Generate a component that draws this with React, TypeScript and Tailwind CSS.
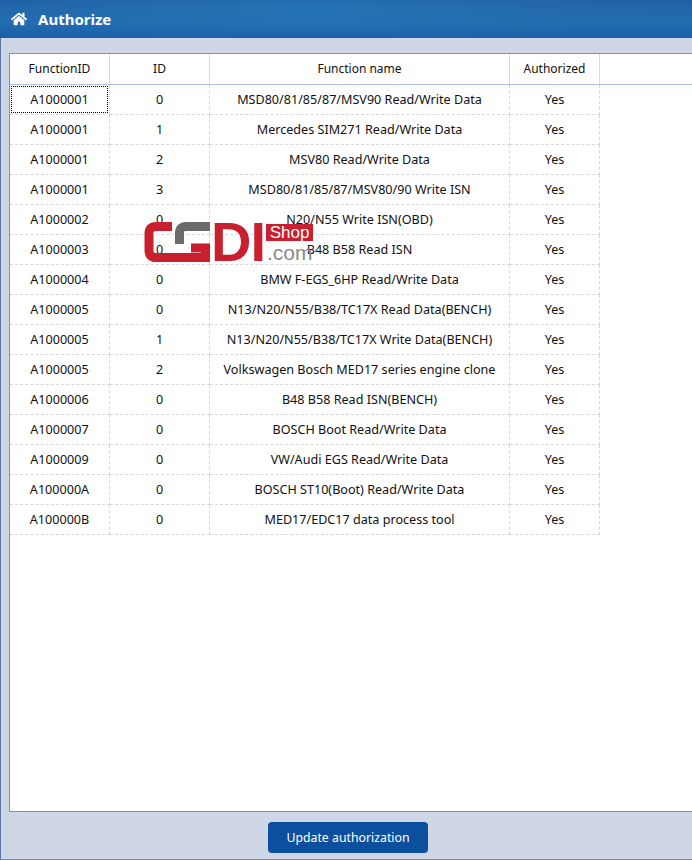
import React from 'react';
import { FaHome } from 'react-icons/fa';

const rows = [
  ['A1000001', '0', 'MSD80/81/85/87/MSV90 Read/Write Data'],
  ['A1000001', '1', 'Mercedes SIM271 Read/Write Data'],
  ['A1000001', '2', 'MSV80 Read/Write Data'],
  ['A1000001', '3', 'MSD80/81/85/87/MSV80/90 Write ISN'],
  ['A1000002', '0', 'N20/N55 Write ISN(OBD)'],
  ['A1000003', '0', 'B48 B58 Read ISN'],
  ['A1000004', '0', 'BMW F-EGS_6HP Read/Write Data'],
  ['A1000005', '0', 'N13/N20/N55/B38/TC17X Read Data(BENCH)'],
  ['A1000005', '1', 'N13/N20/N55/B38/TC17X Write Data(BENCH)'],
  ['A1000005', '2', 'Volkswagen Bosch MED17 series engine clone'],
  ['A1000006', '0', 'B48 B58 Read ISN(BENCH)'],
  ['A1000007', '0', 'BOSCH Boot Read/Write Data'],
  ['A1000009', '0', 'VW/Audi EGS Read/Write Data'],
  ['A100000A', '0', 'BOSCH ST10(Boot) Read/Write Data'],
  ['A100000B', '0', 'MED17/EDC17 data process tool'],
];

const Watermark = () => (
  <div className="absolute left-[143px] top-[222px] w-[172px] h-[42px]">
    <svg className="absolute left-0 top-0" width="72" height="40" viewBox="0 0 72 40" fill="none">
      <path d="M29 4.500H13Q6 4.500 6 11.500V28.500Q6 35.500 13 35.500H62.500V26H48" stroke="#c9202f" strokeWidth="9" />
      <path d="M67 4.500H43Q36.500 4.500 36.500 11V22" stroke="#6b6b6b" strokeWidth="9" />
    </svg>
    <span className="absolute left-[68px] top-[-8px] text-[56px] leading-[56px] font-bold tracking-[-1px] text-[#c9202f] font-['Liberation_Sans',sans-serif]">DI</span>
    <div className="absolute left-[123px] top-[2px] w-[47px] h-[17px] bg-[#c9202f] text-white text-[17px] leading-[17px] text-center font-['Liberation_Sans',sans-serif]">Shop</div>
    <span className="absolute left-[124px] top-[21px] text-[21px] leading-[20px] text-[#8a8a8a] font-['Liberation_Sans',sans-serif]">.com</span>
  </div>
);

const App: React.FC = () => {
  return (
    <div className="relative w-[692px] h-[860px] flex flex-col overflow-hidden bg-[#cfd6e6] font-['Noto_Sans',sans-serif] text-[12px] text-[#111]">
      <div className="h-[38px] shrink-0 flex items-center pl-[11px] gap-[11px] bg-[radial-gradient(ellipse_at_45%_30%,#2674b8_0%,rgba(36,112,180,0.4)_45%,rgba(30,96,165,0)_75%),linear-gradient(180deg,#215fa5_0%,#236cb0_60%,#1a5fa9_100%)]">
        <FaHome size={16} color="#fff" />
        <span className="text-[15px] font-bold text-white">Authorize</span>
      </div>
      <div className="flex-1 flex flex-col pt-[15px] pl-[8px] border-l border-b border-l-[#5f76ab] border-b-[#7f869c]">
        <div className="h-[759px] bg-white border-t border-l border-b border-[#8a8f9c]">
          <div className="flex h-[31px] border-b border-[#a9c6e6]">
            <div className="w-[100px] flex items-center justify-center border-r border-[#d5dae4]">FunctionID</div>
            <div className="w-[100px] flex items-center justify-center border-r border-[#d5dae4]">ID</div>
            <div className="w-[300px] flex items-center justify-center border-r border-[#d5dae4]">Function name</div>
            <div className="w-[90px] flex items-center justify-center border-r border-[#d5dae4]">Authorized</div>
          </div>
          {rows.map((row, i) => (
            <div key={i} className="flex h-[30px] text-[12.6px]">
              <div className="w-[100px] relative flex items-center justify-center pt-[2px] border-r border-b border-dashed border-[#d8d8d8]">
                {row[0]}
                {i === 0 && <div className="absolute left-[1px] top-[1px] right-[1px] bottom-[1px] border border-dotted border-black" />}
              </div>
              <div className="w-[100px] flex items-center justify-center pt-[2px] border-r border-b border-dashed border-[#d8d8d8]">{row[1]}</div>
              <div className="w-[300px] flex items-center justify-center pt-[2px] border-r border-b border-dashed border-[#d8d8d8]">{row[2]}</div>
              <div className="w-[90px] flex items-center justify-center pt-[2px] border-r border-b border-dashed border-[#d8d8d8]">Yes</div>
            </div>
          ))}
        </div>
        <div className="flex-1 flex items-center justify-center pr-[5px] pt-[4px]">
          <button className="w-[160px] h-[31px] pt-[1px] rounded-[4px] bg-[#0b4f9e] text-white text-[12.3px]">Update authorization</button>
        </div>
      </div>
      <Watermark />
    </div>
  );
};

export default App;
